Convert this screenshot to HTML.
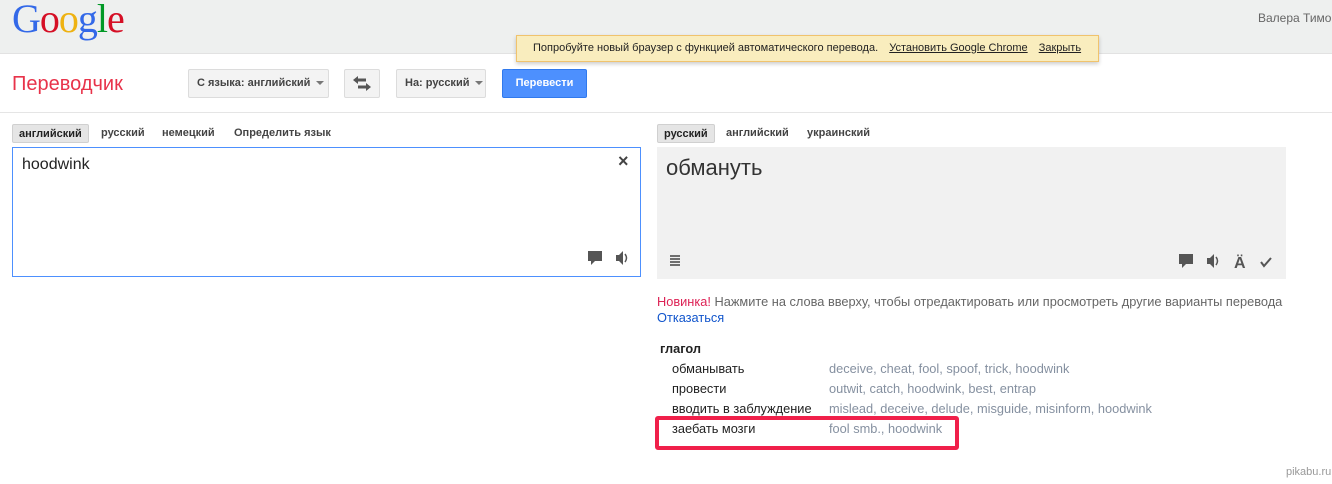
<!DOCTYPE html>
<html><head><meta charset="utf-8"><style>
*{margin:0;padding:0;box-sizing:border-box}
body{width:1332px;height:484px;background:#fff;font-family:"Liberation Sans",Arial,sans-serif;position:relative;overflow:hidden;color:#222}
.a{position:absolute;white-space:nowrap}
.hdr{left:0;top:0;width:1332px;height:54px;background:#eef0ef;border-bottom:1px solid #e2e2e2}
.logo{left:12px;top:-5px;font-family:"Liberation Serif",serif;font-size:40px;letter-spacing:-1px}
.yb{left:516px;top:35px;width:583px;height:27px;background:#f9edbe;border:1px solid #f0c36d;box-shadow:0 2px 4px rgba(0,0,0,.2);font-size:11px;line-height:25px;padding-left:16px;color:#222}
.yb u{margin-left:8px}
.btn{top:69px;height:29px;background:#f3f3f3;border:1px solid #dcdcdc;border-radius:2px;font-size:11px;font-weight:bold;color:#444;line-height:27px;padding:0 8px}
.tri{display:inline-block;border:4px solid transparent;border-top-color:#777;border-bottom:0;margin-left:6px;vertical-align:middle}
.tab{top:124px;height:19px;font-size:11px;font-weight:bold;color:#444;line-height:19px;padding:0 6px}
.sel{background:#e5e5e5;border:1px solid #d0d0d0;border-radius:2px;color:#222}
.g{color:#8590a0}
.t{font-size:12.8px}
</style></head><body>
<div class="a hdr"></div>
<div class="a logo"><span style="color:#3369e8">G</span><span style="color:#d50f25">o</span><span style="color:#eeb211">o</span><span style="color:#3369e8">g</span><span style="color:#009925">l</span><span style="color:#d50f25">e</span></div>
<div class="a" style="left:1258px;top:11px;font-size:12px;color:#666">Валера Тимо</div>
<div class="a yb">Попробуйте новый браузер с функцией автоматического перевода. <u>Установить Google Chrome</u> <u>Закрыть</u></div>
<div class="a" style="left:12px;top:73px;font-size:20px;color:#e8334a">Переводчик</div>
<div class="a btn" style="left:188px;width:141px">С языка: английский<span class="tri"></span></div>
<div class="a btn" style="left:344px;width:36px;padding:0">
<svg width="34" height="27" viewBox="0 0 34 27"><path d="M12 10h9" stroke="#555" stroke-width="3"/><path d="M8 10l5-4v8z" fill="#555"/><path d="M13 17h9" stroke="#555" stroke-width="3"/><path d="M26 17l-5-4v8z" fill="#555"/></svg></div>
<div class="a btn" style="left:396px;width:90px">На: русский<span class="tri"></span></div>
<div class="a btn" style="left:502px;width:85px;background:#4d90fe;border-color:#3079ed;color:#fff;text-align:center">Перевести</div>
<div class="a" style="left:0;top:112px;width:1332px;height:1px;background:#e5e5e5"></div>
<div class="a tab sel" style="left:12px">английский</div>
<div class="a tab" style="left:95px">русский</div>
<div class="a tab" style="left:156px">немецкий</div>
<div class="a tab" style="left:228px">Определить язык</div>
<div class="a" style="left:12px;top:147px;width:629px;height:130px;border:1px solid #4d90fe"></div>
<div class="a" style="left:22px;top:156px;font-size:16px">hoodwink</div>
<div class="a" style="left:618px;top:151px;font-size:18px;font-weight:bold;color:#444">×</div>
<svg class="a" style="left:587px;top:250px" width="46" height="16"><rect x="1" y="1" width="14" height="10" fill="#555"/><path d="M4 11l0 4 4-4z" fill="#555"/><path d="M29 5h3l4-4v14l-4-4h-3z" fill="#555"/><path d="M38 4q3 4 0 8" stroke="#555" fill="none" stroke-width="1.5"/></svg>
<div class="a tab sel" style="left:657px">русский</div>
<div class="a tab" style="left:720px">английский</div>
<div class="a tab" style="left:801px">украинский</div>
<div class="a" style="left:657px;top:147px;width:629px;height:132px;background:#f1f1f1"></div>
<div class="a" style="left:666px;top:155px;font-size:22px;color:#333">обмануть</div>
<svg class="a" style="left:668px;top:254px" width="14" height="14"><path d="M2 2h10M2 5h10M2 8h10M2 11h10" stroke="#444" stroke-width="1.6"/></svg>
<svg class="a" style="left:1178px;top:253px" width="100" height="16"><rect x="1" y="1" width="14" height="10" fill="#555"/><path d="M4 11l0 4 4-4z" fill="#555"/><path d="M29 5h3l4-4v14l-4-4h-3z" fill="#555"/><path d="M38 4q3 4 0 8" stroke="#555" fill="none" stroke-width="1.5"/><text x="56" y="15" font-size="16" font-weight="bold" fill="#555" font-family="Liberation Sans">Ä</text><path d="M83 9l3 4 7-8" stroke="#555" stroke-width="2" fill="none"/></svg>
<div class="a t" style="left:657px;top:294px;color:#666"><span style="color:#dd2255">Новинка!</span> Нажмите на слова вверху, чтобы отредактировать или просмотреть другие варианты перевода</div>
<div class="a t" style="left:657px;top:310px;color:#15c">Отказаться</div>
<div class="a t" style="left:660px;top:341px;font-weight:bold">глагол</div>
<div class="a t" style="left:672px;top:361px">обманывать</div><div class="a g t" style="left:829px;top:361px">deceive, cheat, fool, spoof, trick, hoodwink</div>
<div class="a t" style="left:672px;top:381px">провести</div><div class="a g t" style="left:829px;top:381px">outwit, catch, hoodwink, best, entrap</div>
<div class="a t" style="left:672px;top:401px">вводить в заблуждение</div><div class="a g t" style="left:829px;top:401px">mislead, deceive, delude, misguide, misinform, hoodwink</div>
<div class="a t" style="left:672px;top:421px">заебать мозги</div><div class="a g t" style="left:829px;top:421px">fool smb., hoodwink</div>
<div class="a" style="left:655px;top:416px;width:304px;height:34px;border:4px solid #f0204a;border-radius:3px"></div>
<div class="a" style="left:1286px;top:466px;font-size:11px;color:#999">pikabu.ru</div>
</body></html>
